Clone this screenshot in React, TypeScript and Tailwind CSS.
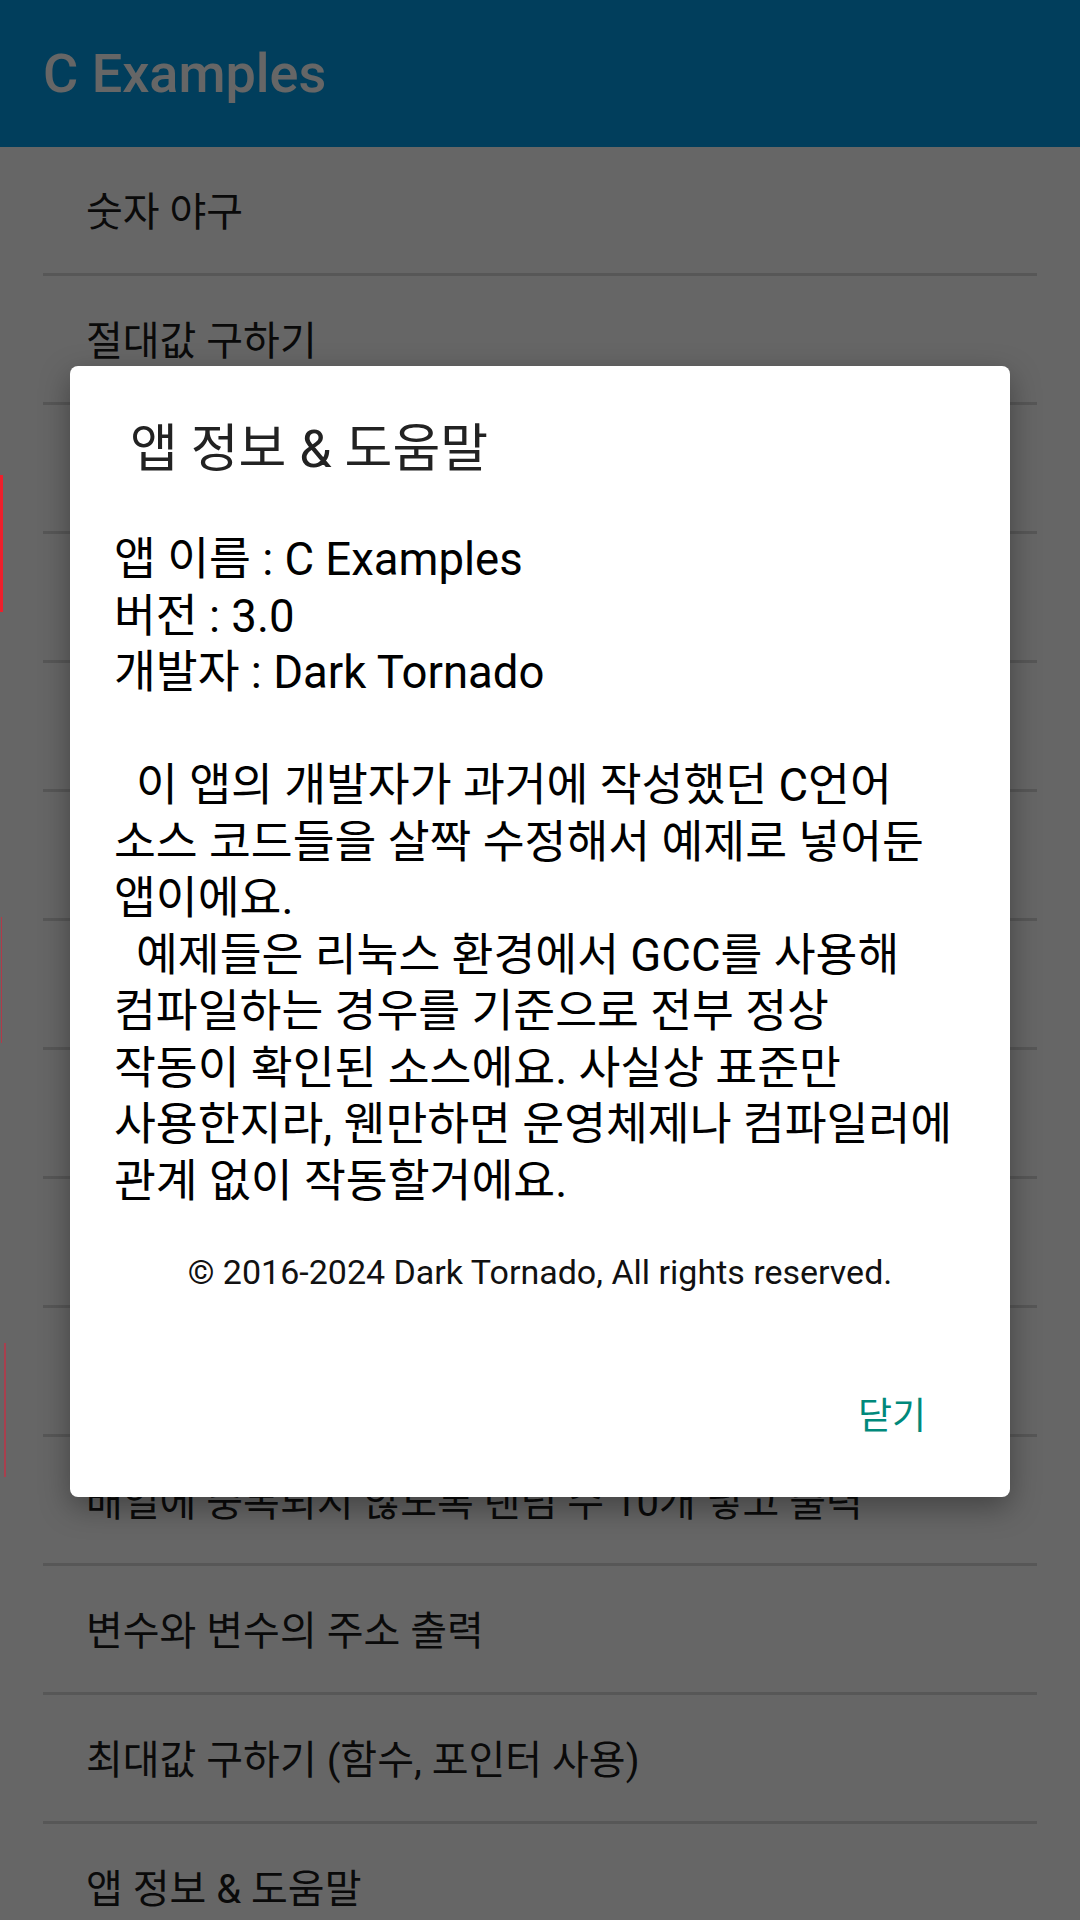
import React from "react";

const items = [
  "숫자 야구",
  "절대값 구하기",
  "구구단 출력",
  "별 찍기",
  "소수 판별하기",
  "최대공약수 구하기",
  "팩토리얼 구하기",
  "피보나치 수열 출력",
  "배열 정렬하기",
  "문자열 뒤집기",
  "배열에 중복되지 않도록 랜덤 수 10개 넣고 출력",
  "변수와 변수의 주소 출력",
  "최대값 구하기 (함수, 포인터 사용)",
  "앱 정보 & 도움말",
];

const paragraph = [
  "이 앱의 개발자가 과거에 작성했던 C언어",
  "소스 코드들을 살짝 수정해서 예제로 넣어둔",
  "앱이에요.",
  "예제들은 리눅스 환경에서 GCC를 사용해",
  "컴파일하는 경우를 기준으로 전부 정상",
  "작동이 확인된 소스에요. 사실상 표준만",
  "사용한지라, 웬만하면 운영체제나 컴파일러에",
  "관계 없이 작동할거에요.",
];

// lines that start a new paragraph get the two-space indent
const indented = [0, 3];

export default function App() {
  return (
    <div className="relative h-[1920px] w-[1080px] overflow-hidden bg-white font-['Roboto','Noto_Sans_CJK_KR',sans-serif]">
      <header className="flex h-[147px] items-center bg-[#039be5] px-[43px]">
        <h1 className="text-[54px] font-medium text-white">C Examples</h1>
      </header>

      <ul>
        {items.map((item) => (
          <li
            key={item}
            className="mx-[43px] flex h-[129px] items-center border-b-[3px] border-[#dadada] pl-[43px] pt-[5px] text-[40px] whitespace-nowrap text-[#1a1a1a]"
          >
            {item}
          </li>
        ))}
      </ul>

      {/* dim */}
      <div className="absolute inset-0 bg-black/60" />

      {/* edge glow */}
      <div className="absolute left-0 top-[475px] h-[137px] w-[3px] bg-[#ee1f2b] blur-[0.5px]" />
      <div className="absolute left-[1px] top-[917px] h-[126px] w-[1px] bg-[#b23a48]" />
      <div className="absolute left-[4px] top-[1343px] h-[134px] w-[2px] bg-[#a8404e]" />

      <div className="absolute left-[70px] top-[366px] flex h-[1131px] w-[940px] flex-col rounded-[8px] bg-white px-[44px] shadow-[0_10px_30px_rgba(0,0,0,0.35)]">
        <h2 className="mt-[54px] pl-[16px] text-[52px] leading-[60px] whitespace-nowrap text-[#222]">
          앱 정보 &amp; 도움말
        </h2>

        <div className="mt-[52px] text-[45.5px] leading-[56.5px] whitespace-nowrap text-black">
          <div>앱 이름 : C Examples</div>
          <div>버전 : 3.0</div>
          <div>개발자 : Dark Tornado</div>
          <div className="h-[56.5px]" />
          {paragraph.map((line, i) => (
            <div key={i}>
              {indented.includes(i) && <span className="inline-block w-[22px]" />}
              {line}
            </div>
          ))}
        </div>

        <p className="mt-[42px] text-center text-[34px] leading-[40px] whitespace-nowrap text-[#111]">
          © 2016-2024 Dark Tornado, All rights reserved.
        </p>

        <div className="mt-[101px] flex justify-end pr-[40px]">
          <button className="text-[37px] leading-[48px] text-[#00897b]">닫기</button>
        </div>
      </div>
    </div>
  );
}
